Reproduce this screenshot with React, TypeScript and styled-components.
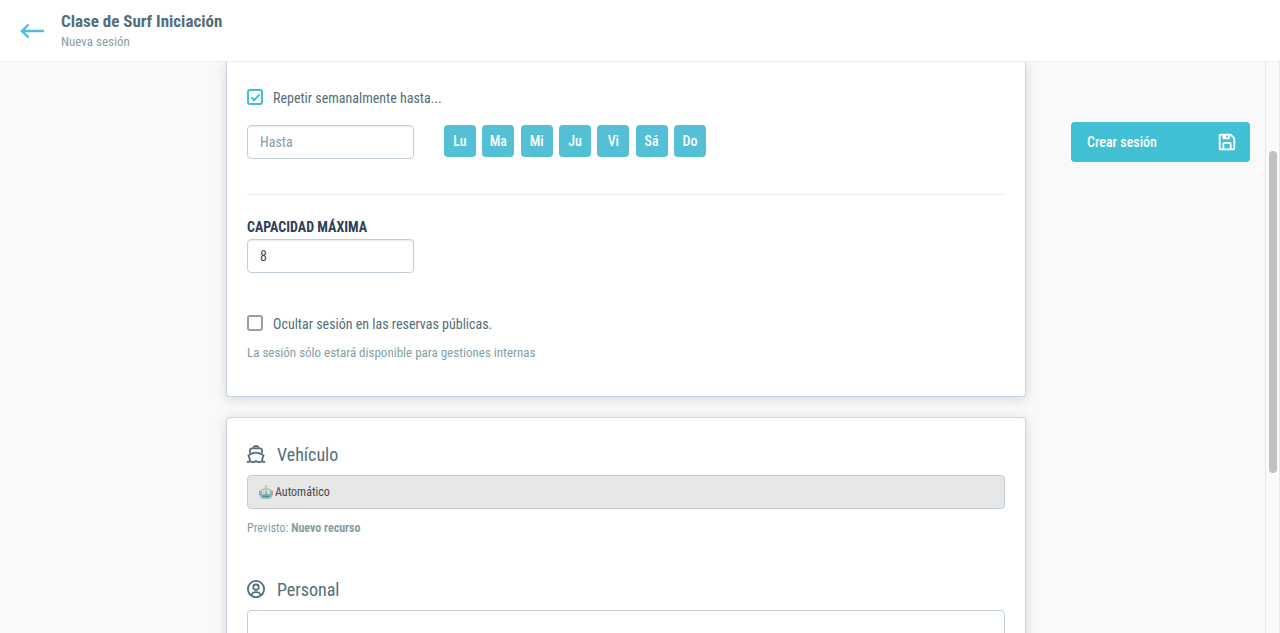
import React, { useState } from "react";
import styled, { createGlobalStyle } from "styled-components";
import { BiSave, BiUserCircle } from "react-icons/bi";

const GlobalStyle = createGlobalStyle`
  *, *::before, *::after { box-sizing: border-box; }
  body { margin: 0; background: #f9f9f9; }
  body, button, input, select {
    font-family: "Roboto Condensed", "Liberation Sans Narrow", Roboto, sans-serif;
  }
`;

const Page = styled.div`
  display: flex;
  flex-direction: column;
  height: 100vh;
  overflow: hidden;
  color: #546e7a;
  font-size: 14px;
  line-height: 20px;
`;

const Header = styled.header`
  display: flex;
  align-items: center;
  gap: 16px;
  flex: none;
  padding: 10px 20px;
  background: #fff;
  border-bottom: 1px solid #eceff1;
`;

const BackLink = styled.a`
  display: flex;
  color: #4dc0d5;
`;

const Title = styled.h1`
  margin: 0;
  font-size: 17px;
  font-weight: 700;
  line-height: 22px;
  color: #546e7a;
`;

const Subtitle = styled.p`
  margin: 0;
  font-size: 13px;
  line-height: 19px;
  color: #849ea5;
`;

const Body = styled.div`
  display: flex;
  flex: 1;
  min-height: 0;
`;

const Content = styled.main`
  display: grid;
  grid-template-columns: minmax(0, 1fr) minmax(0, 800px) minmax(0, 1fr);
  flex: 1;
  min-width: 0;
  padding: 0 15px 0 2px;
  overflow: hidden;
`;

const Column = styled.div`
  grid-column: 2;
  display: flex;
  flex-direction: column;
  gap: 20px;
`;

const Card = styled.section<{ $continued?: boolean }>`
  flex: none;
  padding: ${(p) => (p.$continued ? "25px 20px 34px" : "25px 20px 40px")};
  background: #fff;
  border: 1px solid #cbd5e0;
  border-top-width: ${(p) => (p.$continued ? "0" : "1px")};
  border-radius: ${(p) => (p.$continued ? "0 0 4px 4px" : "4px")};
  box-shadow: 0 2px 12px rgba(84, 110, 122, 0.24);
`;

const CheckLabel = styled.label`
  display: flex;
  align-items: center;
  gap: 10px;
  width: fit-content;
  line-height: 22px;
`;

const Checkbox = styled.input`
  appearance: none;
  display: grid;
  place-items: center;
  width: 16px;
  height: 16px;
  margin: 0 0 2px;
  border: 2px solid #9e9e9e;
  border-radius: 3px;
  &:checked { border-color: #40bfd5; }
  &:checked::after {
    content: "";
    width: 9px;
    height: 5px;
    margin-bottom: 2px;
    border: solid #40bfd5;
    border-width: 0 0 2px 2px;
    transform: rotate(-45deg);
  }
`;

const RepeatRow = styled.div`
  display: flex;
  align-items: flex-start;
  gap: 30px;
  margin-top: 16px;
`;

const TextInput = styled.input`
  display: block;
  width: 167px;
  height: 34px;
  padding: 0 12px;
  border: 1px solid #c3cfd8;
  border-radius: 4px;
  background: #fff;
  box-shadow: inset 0 1px 1px rgba(0, 0, 0, 0.08);
  font-size: 14px;
  color: #484848;
  &::placeholder { color: #849ea5; opacity: 1; }
`;

const Days = styled.div`
  display: grid;
  grid-template-columns: repeat(7, 32px);
  justify-content: space-between;
  width: 262px;
`;

const DayButton = styled.button`
  height: 32px;
  padding: 0;
  border: 0;
  border-radius: 4px;
  background: #54c0d5;
  color: #fff;
  font-size: 14px;
  font-weight: 500;
`;

const Divider = styled.hr`
  margin: 35px 0 22px;
  border: 0;
  border-top: 1px solid #eceeee;
`;

const FieldLabel = styled.label`
  display: block;
  margin-bottom: 2px;
  font-weight: 700;
  line-height: 20px;
  color: #2e4057;
`;

const HideOption = styled.div`
  margin-top: 40px;
`;

const Hint = styled.p`
  margin: 9px 0 0;
  font-size: 13px;
  line-height: 18px;
  color: #849ea5;
`;

const SectionTitle = styled.h2`
  display: flex;
  align-items: center;
  gap: 12px;
  margin: 0 0 8px;
  font-size: 18px;
  font-weight: 400;
  line-height: 24px;
  svg { margin-bottom: 2px; }
`;

const SelectBox = styled.div<{ $disabled?: boolean }>`
  display: flex;
  align-items: center;
  gap: 2px;
  height: 34px;
  padding: 0 11px;
  border: 1px solid #c3cfd8;
  border-radius: 4px;
  background: ${(p) => (p.$disabled ? "#e7e7e7" : "#fff")};
`;

const Select = styled.select`
  appearance: none;
  flex: 1;
  min-width: 0;
  padding: 0;
  border: 0;
  background: transparent;
  font-size: 12px;
  line-height: 18px;
  color: #484848;
  opacity: 1;
`;

const Forecast = styled.p`
  margin: 10px 0 41px;
  font-size: 12px;
  line-height: 18px;
  color: #849ea5;
`;

const Aside = styled.aside`
  grid-column: 3;
  padding: 60px 0 0 45px;
`;

const CreateButton = styled.button`
  display: flex;
  align-items: center;
  justify-content: space-between;
  width: 100%;
  height: 40px;
  padding: 0 12px 0 16px;
  border: 0;
  border-radius: 4px;
  background: #40bfd5;
  color: #fff;
  font-size: 14px;
  font-weight: 500;
`;

const ScrollRail = styled.div`
  display: grid;
  grid-template-rows: 89fr 322fr 160fr;
  flex: none;
  width: 15px;
  padding: 0 2px 0 3px;
  background: #fafafa;
  border: solid #e8e8e8;
  border-width: 0 1px;
`;

const ScrollThumb = styled.div`
  grid-row: 2;
  border-radius: 4px;
  background: #c1c1c1;
`;

const ArrowLeft = () => (
  <svg width="25" height="16" viewBox="0 0 25 16" fill="none" stroke="currentColor" strokeWidth="2.4" aria-hidden="true">
    <path d="M24 8H2M8.500 1.500L2 8l6.500 6.500" />
  </svg>
);

const Boat = () => (
  <svg width="18" height="18" viewBox="0 0 18 18" fill="none" stroke="currentColor" strokeWidth="1.8" strokeLinejoin="round" aria-hidden="true">
    <path d="M6.300 3.200C6.600 1.600 7.400 1 9 1s2.400.6 2.700 2.200" />
    <path d="M3 8.600V5.400c0-1.300.8-2.100 2.100-2.100h7.800c1.300 0 2.100.8 2.100 2.100v3.200" />
    <path d="M3.200 15.200L1.400 10.400C3.500 8.800 6 7.600 9 7.600s5.500 1.200 7.600 2.800l-1.800 4.800" />
    <path d="M0 17c1.400 0 2.200-.3 3-1 1.800 1.300 4.200 1.300 6 0 1.800 1.300 4.200 1.300 6 0 .8.700 1.600 1 3 1" />
  </svg>
);

const Robot = () => (
  <svg width="14" height="14" viewBox="0 0 14 14" aria-hidden="true">
    <circle cx="7" cy="1.400" r="1.200" fill="#f2b84b" />
    <path d="M6.400 2.400h1.200v2H6.400z" fill="#b3a98c" />
    <rect x="0" y="5.500" width="2" height="5" rx="1" fill="#d98b86" />
    <rect x="12" y="5.500" width="2" height="5" rx="1" fill="#d98b86" />
    <path d="M1 8c0-3.200 2.300-4.500 6-4.500S13 4.800 13 8v3c0 2-2 3-6 3s-6-1-6-3z" fill="#84b6bf" />
    <path d="M2 6.500C3 4.600 5 4.200 7 4.200s4 .4 5 2.300z" fill="#c3d9dc" />
    <circle cx="4.500" cy="7.500" r="1.500" fill="#eef7f7" />
    <circle cx="9.500" cy="7.500" r="1.500" fill="#eef7f7" />
    <circle cx="4.500" cy="7.500" r=".6" fill="#c76b67" />
    <circle cx="9.500" cy="7.500" r=".6" fill="#c76b67" />
    <path d="M7 8l.9 1.500H6.100z" fill="#d4726c" />
    <path d="M4 11.300h6" stroke="#527f8b" strokeWidth="1.200" />
  </svg>
);

const DAYS = ["Lu", "Ma", "Mi", "Ju", "Vi", "Sá", "Do"];

export default function App() {
  const [repeat, setRepeat] = useState(true);
  const [hidden, setHidden] = useState(false);

  return (
    <>
      <GlobalStyle />
      <Page>
        <Header>
          <BackLink href="#" aria-label="Volver">
            <ArrowLeft />
          </BackLink>
          <div>
            <Title>Clase de Surf Iniciación</Title>
            <Subtitle>Nueva sesión</Subtitle>
          </div>
        </Header>
        <Body>
          <Content>
            <Column>
              <Card $continued>
                <CheckLabel>
                  <Checkbox type="checkbox" checked={repeat} onChange={(e) => setRepeat(e.target.checked)} />
                  Repetir semanalmente hasta...
                </CheckLabel>
                <RepeatRow>
                  <TextInput placeholder="Hasta" aria-label="Hasta" />
                  <Days>
                    {DAYS.map((day) => (
                      <DayButton type="button" key={day}>{day}</DayButton>
                    ))}
                  </Days>
                </RepeatRow>
                <Divider />
                <FieldLabel htmlFor="capacity">CAPACIDAD MÁXIMA</FieldLabel>
                <TextInput id="capacity" defaultValue="8" />
                <HideOption>
                  <CheckLabel>
                    <Checkbox type="checkbox" checked={hidden} onChange={(e) => setHidden(e.target.checked)} />
                    Ocultar sesión en las reservas públicas.
                  </CheckLabel>
                  <Hint>La sesión sólo estará disponible para gestiones internas</Hint>
                </HideOption>
              </Card>
              <Card>
                <SectionTitle>
                  <Boat />
                  Vehículo
                </SectionTitle>
                <SelectBox $disabled>
                  <Robot />
                  <Select disabled aria-label="Vehículo">
                    <option>Automático</option>
                  </Select>
                </SelectBox>
                <Forecast>
                  Previsto: <b>Nuevo recurso</b>
                </Forecast>
                <SectionTitle>
                  <BiUserCircle size={18} viewBox="2 2 20 20" aria-hidden="true" />
                  Personal
                </SectionTitle>
                <SelectBox>
                  <Select aria-label="Personal" />
                </SelectBox>
              </Card>
            </Column>
            <Aside>
              <CreateButton type="button">
                Crear sesión
                <BiSave size={22} aria-hidden="true" />
              </CreateButton>
            </Aside>
          </Content>
          <ScrollRail aria-hidden="true">
            <ScrollThumb />
          </ScrollRail>
        </Body>
      </Page>
    </>
  );
}
